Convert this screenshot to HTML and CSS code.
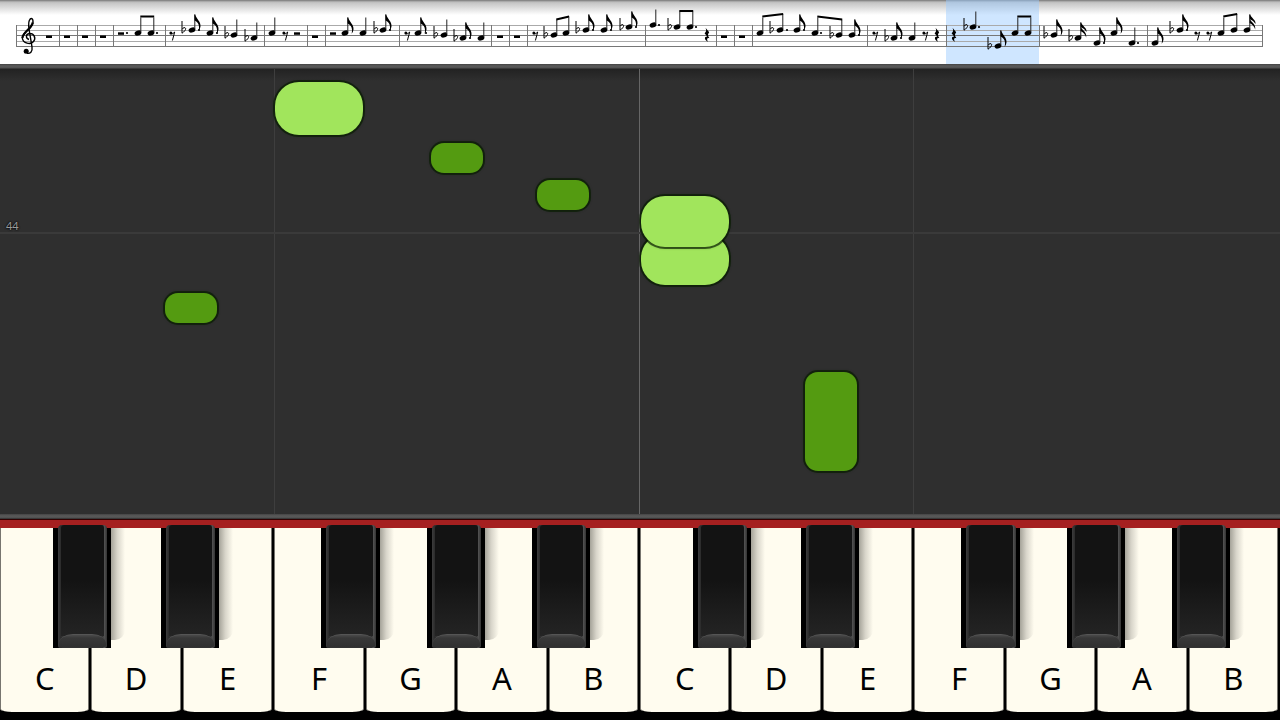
FILE: index.html
```html
<!DOCTYPE html>
<html lang="en">
<head>
<meta charset="utf-8">
<meta name="viewport" content="width=device-width, initial-scale=1">
<title>Piano</title>
<link rel="stylesheet" href="styles.css">
</head>
<body>
<main class="app">
  <section class="score" aria-label="Score">
    <svg class="sheet" viewBox="0 0 1280 64" role="img" aria-label="Sheet music">
      <defs>
        <g id="h"><ellipse rx="3.5" ry="2.5" transform="rotate(-22)"/></g>
        <g id="q"><use href="#h"/><path class="stem" d="M2.8-1V-15.5"/></g>
        <g id="e"><use href="#q"/><path d="M2.4-15.5H3.2C4-11.500 9-8.500 8.500-3.500Q8.200-1 6.600.8C7.900-4 6.600-7.500 2.600-9.500Z"/></g>
        <g id="s"><use href="#q"/><path d="M2.400-15.500H3.200C4-12 9-10.500 8.600-6Q6.500-9.500 2.600-11ZM2.600-11.500C3.400-8 9.100-6.500 8.200-.5Q7-5 2.600-7Z"/></g>
        <g id="f"><path class="flat" d="M-2-9V3.200C0 2 2-.2 1.600-1.700C1.200-2.900-.8-2.500-2-.8"/></g>
        <g id="d"><circle r="1.100"/></g>
        <g id="w"><path d="M-3 .5h6v2.500h-6Z"/></g>
        <g id="r"><path d="M-3-2.700h6v2.500h-6Z"/></g>
        <g id="k"><circle cx="-1.100" cy="-2" r="1.500"/><path class="rest" d="M-1.500-1.200Q1-.5 2.700-3L.4 5.500"/></g>
        <g id="z"><path d="M-1.500-7.300L2.200-2.800C.6-.8.500.5 2.500 3.200C-.1 2.600-.6 4.500 1 6.800C-3.300 4.500-2.600 1.200.2 1.500L-2.400-1.700C-.5-3.400-.5-5-1.500-7.300Z"/></g>
      </defs>
      <rect class="current" x="946" y="0" width="93" height="64"/>
      <path class="line" d="M16 25.500H1262M16 30.500H1262M16 41.500H1262"/>
      <path class="line strong" d="M16 35.500H1262M16 46.500H1262"/>
      <path class="bar" d="M16.500 25V47M59.500 25V47M77.500 25V47M95.500 25V47M113.500 25V47M165.500 25V47M264.500 25V47M307.500 25V47M325.500 25V47M399.500 25V47M491.500 25V47M509.500 25V47M527.500 25V47M645.500 25V47M716.500 25V47M734.500 25V47M752.500 25V47M867.500 25V47M946.500 25V47M1039.500 25V47M1147.500 25V47M1262.500 25V47"/>
      <path class="clef" d="M29 39.500C25.500 38.500 25.500 34 29.500 33.500C34 33.200 36.300 38 33.500 41.500C30.500 45 23 43.500 22.300 38C22 32 32.500 28.500 33 22.500C33.200 18 30.800 17.500 29.300 20.500C27.800 23.500 28.800 29 30 35L32 47C32.800 52 30 53.800 27 53.300"/>
      <path class="clef heavy" d="M22.500 38C22 33 32 28.500 32.700 22.500"/>
      <circle cx="26.200" cy="51.300" r="2.500"/>
      <use href="#w" x="49" y="35"/><use href="#w" x="67" y="35"/><use href="#w" x="85" y="35"/><use href="#w" x="103" y="35"/>
      <use href="#r" x="121" y="35"/><use href="#d" x="127" y="33"/>
      <use href="#q" x="138" y="33"/><use href="#q" x="151" y="33"/><use href="#d" x="157" y="33"/>
      <use href="#k" x="172" y="35"/>
      <use href="#f" x="184" y="30"/><use href="#e" x="192" y="30"/><use href="#d" x="199" y="30"/>
      <use href="#e" x="210" y="33"/><use href="#d" x="217" y="33"/>
      <use href="#f" x="227" y="35"/><use href="#q" x="234" y="35"/>
      <use href="#f" x="247" y="38"/><use href="#q" x="254" y="38"/>
      <use href="#q" x="272" y="33"/><use href="#k" x="285" y="35"/><use href="#r" x="297" y="35"/>
      <use href="#w" x="315" y="35"/>
      <use href="#r" x="333" y="35"/><use href="#e" x="345" y="33"/><use href="#q" x="363" y="33"/>
      <use href="#f" x="376" y="30"/><use href="#e" x="383" y="30"/><use href="#d" x="390" y="30"/>
      <use href="#k" x="407" y="35"/><use href="#e" x="418" y="33"/><use href="#d" x="426" y="33"/>
      <use href="#f" x="436" y="35"/><use href="#q" x="444" y="35"/>
      <use href="#f" x="456" y="38"/><use href="#e" x="463" y="38"/><use href="#d" x="470" y="38"/><use href="#q" x="481" y="38"/>
      <use href="#w" x="500" y="35"/><use href="#w" x="517" y="35"/>
      <use href="#k" x="535" y="35"/><use href="#f" x="546" y="35"/><use href="#q" x="554" y="35"/><use href="#q" x="566" y="33"/>
      <use href="#f" x="578" y="30"/><use href="#e" x="586" y="30"/><use href="#d" x="593" y="30"/>
      <use href="#e" x="604" y="30"/><use href="#d" x="611" y="30"/>
      <use href="#f" x="622" y="27"/><use href="#e" x="629" y="27"/><use href="#d" x="636" y="27"/>
      <use href="#q" x="653" y="25"/><use href="#d" x="659" y="25"/>
      <use href="#f" x="670" y="27"/><use href="#q" x="677" y="27"/><use href="#q" x="690" y="27"/><use href="#d" x="696" y="27"/>
      <use href="#z" x="707" y="35"/><use href="#w" x="724" y="35"/><use href="#w" x="742" y="35"/>
      <use href="#q" x="760" y="33"/><use href="#f" x="772" y="30"/><use href="#q" x="780" y="30"/><use href="#d" x="787" y="30"/>
      <use href="#e" x="797" y="30"/><use href="#d" x="804" y="30"/>
      <use href="#q" x="815" y="33"/><use href="#d" x="821" y="33"/><use href="#f" x="832" y="35"/><use href="#q" x="839" y="35"/>
      <use href="#e" x="852" y="35"/><use href="#d" x="859" y="35"/>
      <use href="#k" x="875" y="35"/><use href="#f" x="887" y="38"/><use href="#e" x="894" y="38"/><use href="#d" x="901" y="38"/>
      <use href="#q" x="912" y="38"/><use href="#k" x="925" y="35"/><use href="#z" x="937" y="35"/>
      <use href="#z" x="954" y="35"/><use href="#f" x="966" y="27"/><use href="#q" x="973" y="27"/><use href="#d" x="979" y="27"/>
      <use href="#f" x="990" y="46"/><use href="#e" x="998" y="46"/><use href="#q" x="1015" y="33"/><use href="#q" x="1028" y="33"/>
      <use href="#f" x="1046" y="35"/><use href="#e" x="1054" y="35"/><use href="#f" x="1071" y="38"/><use href="#s" x="1078" y="38"/>
      <use href="#e" x="1097" y="43"/><use href="#d" x="1104" y="43"/><use href="#e" x="1114" y="33"/><use href="#q" x="1132" y="43"/><use href="#d" x="1138" y="43"/>
      <use href="#e" x="1155" y="43"/><use href="#f" x="1172" y="30"/><use href="#e" x="1180" y="30"/><use href="#d" x="1187" y="30"/>
      <use href="#k" x="1197" y="35"/><use href="#k" x="1209" y="35"/><use href="#q" x="1221" y="33"/><use href="#q" x="1234" y="30"/><use href="#s" x="1247" y="30"/>
      <path class="beam" d="M140.300 16.500H154.200M556.300 19.500L569.200 16.500M679.300 11H693.200M762.300 16.500L783.200 14M817.300 16.500L842.200 19.500M1017.300 16.500H1031.200M1223.300 16.500L1237.200 14"/>
    </svg>
  </section>
  <div class="rail"></div>
  <section class="roll" aria-label="Falling notes">
    <div class="guide faint g1"></div>
    <div class="guide g2"></div>
    <div class="guide faint g3"></div>
    <div class="measure"><span class="number">44</span></div>
    <div class="note light n1"></div>
    <div class="note dark n2"></div>
    <div class="note dark n3"></div>
    <div class="note light n5"></div>
    <div class="note light n4"></div>
    <div class="note dark n6"></div>
    <div class="note dark n7"></div>
  </section>
  <div class="rail"></div>
  <section class="piano" aria-label="Keyboard">
    <div class="octave">
      <button class="white">C</button><button class="white">D</button><button class="white">E</button><button class="white">F</button><button class="white">G</button><button class="white">A</button><button class="white">B</button>
      <button class="black cs" aria-label="C sharp"><span class="cap"></span></button>
      <button class="black ds" aria-label="D sharp"><span class="cap"></span></button>
      <button class="black fs" aria-label="F sharp"><span class="cap"></span></button>
      <button class="black gs" aria-label="G sharp"><span class="cap"></span></button>
      <button class="black as" aria-label="A sharp"><span class="cap"></span></button>
    </div>
    <div class="octave">
      <button class="white">C</button><button class="white">D</button><button class="white">E</button><button class="white">F</button><button class="white">G</button><button class="white">A</button><button class="white">B</button>
      <button class="black cs" aria-label="C sharp"><span class="cap"></span></button>
      <button class="black ds" aria-label="D sharp"><span class="cap"></span></button>
      <button class="black fs" aria-label="F sharp"><span class="cap"></span></button>
      <button class="black gs" aria-label="G sharp"><span class="cap"></span></button>
      <button class="black as" aria-label="A sharp"><span class="cap"></span></button>
    </div>
  </section>
</main>
</body>
</html>
```

FILE: styles.css
```css
* { box-sizing: border-box; }
body { margin: 0; background: #000; font-family: "Noto Sans", "Open Sans", sans-serif; }
button { appearance: none; border: 0; margin: 0; padding: 0; font: inherit; color: #000; }

.app { display: flex; flex-direction: column; min-height: 100vh; }

.score { background: linear-gradient(#777 0, #bbb 2px, #c6c6c6 3px, #fff 15px); }
.sheet { display: block; width: 100%; }
.current { fill: #9bcaff; fill-opacity: 0.48; }
.line { stroke: #aaa; stroke-width: 1; fill: none; }
.strong { stroke: #777; }
.bar { stroke: #777; fill: none; }
.stem { stroke: #222; stroke-width: 1; fill: none; }
.flat { stroke: #000; stroke-width: 1; fill: none; }
.rest { stroke: #000; stroke-width: 1; fill: none; }
.beam { stroke: #000; stroke-width: 2; fill: none; }
.clef { stroke: #000; stroke-width: 1.4; fill: none; }
.heavy { stroke-width: 2.2; }

.rail { height: 5px; flex: none; background: linear-gradient(#444 0, #5a5a5a 2px, #505050 4px, #222 5px); }

.roll { position: relative; flex: 1; min-height: 420px; overflow: hidden; background: linear-gradient(#222 0, #2f2f2f 12px); }
.guide { position: absolute; top: 0; bottom: 0; width: 1px; background: #666; }
.faint { background: #3e3e3e; }
.g1 { left: 21.4%; }
.g2 { left: 49.92%; }
.g3 { left: 71.36%; }
.measure { position: absolute; left: 0; right: 0; top: 148px; height: 17px; border-bottom: 2px solid #3a3a3a; }
.number { display: block; padding-left: 6px; font-size: 11px; line-height: 17px; color: #999; text-shadow: 0 0 2px #000, 0 0 2px #000; }

.note { position: absolute; box-shadow: 0 0 0 2px rgba(8, 28, 0, 0.65), 0 0 3px 1px rgba(8, 28, 0, 0.4); }
.light { width: 6.88%; border-radius: 24px; background: #a1e55c; }
.dark { width: 4.06%; border-radius: 13px; background: #549b11; }
.n1 { left: 21.5%; top: 13px; height: 53px; }
.n2 { left: 33.7%; top: 74px; height: 30px; }
.n3 { left: 41.94%; top: 111px; height: 30px; }
.n4 { left: 50.05%; top: 127px; height: 51px; }
.n5 { left: 50.05%; top: 165px; height: 51px; }
.n6 { left: 12.9%; top: 224px; height: 30px; }
.n7 { left: 62.9%; top: 303px; height: 99px; }

.piano { display: grid; grid-template-columns: 1fr 1fr; height: 201px; flex: none; padding-bottom: 8px; background: #000; border-top: 1px solid #300; }
.octave { position: relative; z-index: 0; display: grid; grid-template-columns: repeat(7, 1fr); border-top: 8px solid #a52020; }
.white { position: relative; z-index: -2; display: flex; align-items: flex-end; justify-content: center; margin-right: 2px; padding-bottom: 13px; font-size: 31px; line-height: 42px; background: #fffcef; border: solid #77756f; border-width: 0 1px; border-radius: 0 0 12px 12px / 0 0 3px 3px; }
.black { position: absolute; top: -4px; width: 9.1%; height: 124px; padding: 0 4px 0 5px; background: linear-gradient(transparent 4px, #000 4px); }
.black::before { content: ""; position: absolute; z-index: -1; left: 100%; top: 4px; width: 14px; height: 112px; background: linear-gradient(to right, #a5a399, #d8d5ca 45%, transparent); border-radius: 0 0 10px 0; }
.cap { position: relative; display: block; height: 123px; padding: 0 3px; background: linear-gradient(to right, #3c3c3c, #2a2a2a 3px, #333 4px, #333 calc(100% - 4px), #555 calc(100% - 3px), #333); border-radius: 4px 4px 2px 2px; }
.cap::before { content: ""; display: block; height: 111px; background: linear-gradient(#131313 50%, #242424); border-radius: 3px 3px 0 0; }
.cap::after { content: ""; position: absolute; left: 1px; right: 1px; bottom: 1px; height: 12px; background: linear-gradient(#4a4a4a, #383838 3px, #303030); border-top: 1px solid #555; border-radius: 14px 14px 2px 2px / 9px 9px 1px 1px; }
.cs { left: 8.3%; }
.ds { left: 25.15%; }
.fs { left: 50.2%; }
.gs { left: 66.75%; }
.as { left: 83.15%; }
```
